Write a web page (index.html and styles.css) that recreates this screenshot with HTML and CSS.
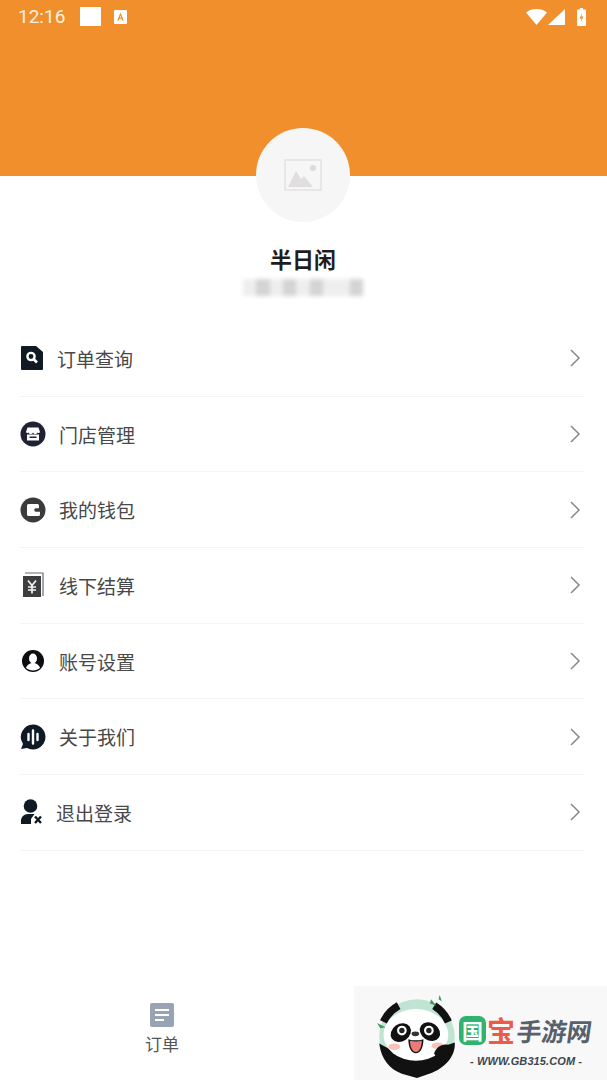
FILE: index.html
```html
<!DOCTYPE html>
<html lang="zh-CN">
<head>
    <meta charset="UTF-8">
    <meta name="viewport" content="width=device-width, initial-scale=1.0">
    <title>我的</title>
    <link rel="stylesheet" href="styles.css">
</head>

<body>
    <div class="page">
        <!-- 顶部橙色区域 -->
        <header class="top">
            <div class="status">
                <span class="time">12:16</span>
                <span class="status_square"></span>
                <svg class="status_a" width="13" height="14" viewBox="0 0 13 14"><path fill="#fff" fill-rule="evenodd" d="M1 0h11a1 1 0 0 1 1 1v12a1 1 0 0 1-1 1H1a1 1 0 0 1-1-1V1a1 1 0 0 1 1-1zm5.500 2.500L3.200 10.500h1.600l.6-1.700h2.300l.6 1.700h1.500zM5.900 7.500l.6-2 .7 2z"/></svg>
                <span class="status_right">
                    <svg width="21" height="16" viewBox="0 0 21 16"><path fill="#fff" d="M0 3.500C3 1 6.500 0 10.500 0S18 1 21 3.500L10.500 16z"/></svg>
                    <svg class="status_signal" width="17" height="16" viewBox="0 0 17 16"><path fill="#fff" d="M17 0v16H0z"/></svg>
                    <svg class="status_battery" width="9" height="18" viewBox="0 0 9 18"><path fill="#fff" fill-rule="evenodd" d="M3 0h3v1.500h2a1 1 0 0 1 1 1V17a1 1 0 0 1-1 1H1a1 1 0 0 1-1-1V2.500a1 1 0 0 1 1-1h2zM5 5L2.500 10.500h2L4 14l2.500-5.500h-2z"/></svg>
                </span>
            </div>
        </header>

        <div class="profile">
            <div class="avatar">
                <svg width="38" height="32" viewBox="0 0 38 32">
                    <path fill="none" stroke="#e4e2e2" stroke-width="1.500" d="M1 1h36v30H1z"/>
                    <circle cx="29" cy="9" r="3" fill="#dcdada"/>
                    <path fill="#e0dede" d="M4 28l8-16 5 8 3-3 9 11z"/>
                </svg>
            </div>
            <div class="name">半日闲</div>
            <div class="phone">
                <i></i><i class="dark"></i><i></i><i class="dark"></i><i></i><i class="dark"></i><i></i><i></i><i class="dark"></i>
            </div>
        </div>

        <ul class="menu">
            <li class="menu_item">
                <svg class="menu_icon" width="37" height="26" viewBox="0 0 37 26"><path fill="#0f1a24" d="M2 1h14l7 6v17a1 1 0 0 1-1 1H2a1 1 0 0 1-1-1V2a1 1 0 0 1 1-1z"/><circle cx="11" cy="11.500" r="3.600" fill="none" stroke="#fff" stroke-width="2.400"/><path stroke="#fff" stroke-width="2.600" d="M13.500 14l3.500 3.500"/></svg>
                <span>订单查询</span>
                <svg class="arrow" width="12" height="20" viewBox="0 0 12 20"><path fill="none" stroke="#888" stroke-width="1.500" d="M2 2l8 8-8 8"/></svg>
            </li>
            <li class="menu_item">
                <svg class="menu_icon" width="39" height="26" viewBox="0 0 39 26"><circle cx="13" cy="13" r="12.500" fill="#1e2233"/><path fill="#fff" d="M7.500 6.500h11l1.500 4.500a1.500 1.500 0 0 1-2.400.5 2.500 2.500 0 0 1-4.600 0 2.500 2.500 0 0 1-4.600 0A1.500 1.500 0 0 1 6 11z"/><path fill="#fff" d="M7 13.500h12v6H7z"/><path fill="#1e2233" d="M9.500 15.500h7V17h-7z"/></svg>
                <span>门店管理</span>
                <svg class="arrow" width="12" height="20" viewBox="0 0 12 20"><path fill="none" stroke="#888" stroke-width="1.500" d="M2 2l8 8-8 8"/></svg>
            </li>
            <li class="menu_item">
                <svg class="menu_icon" width="39" height="26" viewBox="0 0 39 26"><circle cx="13" cy="13" r="12.500" fill="#3b3b3d"/><path fill="#fff" d="M7 8.500A1.500 1.500 0 0 1 8.500 7h9A1.500 1.500 0 0 1 19 8.500v2.700h-3a1.800 1.800 0 0 0 0 3.600h4V17.500a1.500 1.500 0 0 1-1.500 1.500h-10A1.500 1.500 0 0 1 7 17.500z"/></svg>
                <span>我的钱包</span>
                <svg class="arrow" width="12" height="20" viewBox="0 0 12 20"><path fill="none" stroke="#888" stroke-width="1.500" d="M2 2l8 8-8 8"/></svg>
            </li>
            <li class="menu_item">
                <svg class="menu_icon" width="39" height="28" viewBox="0 0 39 28"><path fill="none" stroke="#6a6a6a" stroke-width="1.200" d="M5 2h18v23"/><path fill="#3d3e40" d="M3 5h18v21H3z"/><path fill="none" stroke="#f4f4f4" stroke-width="1.700" d="M8 9.500l4 5 4-5M12 14.500v8M8 16h8M8 19h8"/></svg>
                <span>线下结算</span>
                <svg class="arrow" width="12" height="20" viewBox="0 0 12 20"><path fill="none" stroke="#888" stroke-width="1.500" d="M2 2l8 8-8 8"/></svg>
            </li>
            <li class="menu_item">
                <svg class="menu_icon" width="39" height="26" viewBox="0 0 39 26"><circle cx="13" cy="13" r="11" fill="#0b0d10"/><ellipse cx="13" cy="10.500" rx="4" ry="5" fill="#fff"/><path fill="#fff" d="M6 20c1-3.500 4-5 7-5s6 1.500 7 5c-2 1.700-4.200 2.400-7 2.400S8 21.700 6 20z"/></svg>
                <span>账号设置</span>
                <svg class="arrow" width="12" height="20" viewBox="0 0 12 20"><path fill="none" stroke="#888" stroke-width="1.500" d="M2 2l8 8-8 8"/></svg>
            </li>
            <li class="menu_item">
                <svg class="menu_icon" width="39" height="26" viewBox="0 0 39 26"><path fill="#0f1a24" d="M13 .5a12.500 12.500 0 1 1-6 23.500l-6 1 2-5A12.500 12.500 0 0 1 13 .5z"/><path stroke="#fff" stroke-width="2.400" stroke-linecap="round" d="M8.500 10v6M13 6.500v13M17.500 10v6"/></svg>
                <span>关于我们</span>
                <svg class="arrow" width="12" height="20" viewBox="0 0 12 20"><path fill="none" stroke="#888" stroke-width="1.500" d="M2 2l8 8-8 8"/></svg>
            </li>
            <li class="menu_item">
                <svg class="menu_icon" width="36" height="26" viewBox="0 0 36 26"><circle cx="10.500" cy="7" r="6.800" fill="#0f1a24"/><path fill="#0f1a24" d="M1 25v-3c0-4 3-7 7-7h6.500L11 20v5z"/><path stroke="#0f1a24" stroke-width="2.400" d="M15 17.500l6 6.500M21 17.500L15 24"/></svg>
                <span>退出登录</span>
                <svg class="arrow" width="12" height="20" viewBox="0 0 12 20"><path fill="none" stroke="#888" stroke-width="1.500" d="M2 2l8 8-8 8"/></svg>
            </li>
        </ul>

        <nav class="tabbar">
            <div class="tab">
                <svg width="24" height="24" viewBox="0 0 24 24"><rect width="24" height="24" rx="2" fill="#98a3b3"/><path stroke="#fff" stroke-width="1.800" d="M5 7h14M5 12h14M5 17h9"/></svg>
                <span>订单</span>
            </div>
        </nav>

        <!-- 水印 -->
        <div class="mark">
            <svg class="panda" width="92" height="94" viewBox="4.670 3.800 85.200 87">
                <circle cx="63" cy="51" r="35" fill="#bfe4d2"/>
                <path fill="none" stroke="#111" stroke-width="7" d="M33 37A33 33 0 0 1 47 22M80 22A33 33 0 0 1 93 37" transform="translate(-1 0)"/>
                <path fill="#3f9a5f" d="M76 16l5 6-6-2zM84 12l2 6-3-2zM26 38l8 4-5 1z"/>
                <path fill="#111" d="M28 57l9 5 52-3 9-3c1 14-11 24-21 28l-14 5-14-4C38 81 30 72 28 57z"/>
                <ellipse cx="62" cy="49" rx="30" ry="24" fill="#fff"/>
                <ellipse cx="48" cy="47" rx="10" ry="8" fill="#111" transform="rotate(-35 48 47)"/>
                <ellipse cx="75" cy="46" rx="10" ry="8" fill="#111" transform="rotate(35 75 46)"/>
                <circle cx="49" cy="45" r="4.500" fill="#fff"/>
                <circle cx="74" cy="45" r="4.500" fill="#fff"/>
                <circle cx="49" cy="45" r="2.500" fill="#222"/>
                <circle cx="74" cy="45" r="2.500" fill="#222"/>
                <ellipse cx="61.500" cy="48" rx="3.500" ry="2.200" fill="#333"/>
                <path fill="#111" d="M55 53c4 1.500 10 1.500 14 0 0 8-3 13-7 13s-7-5-7-13z"/>
                <path fill="#ec7a78" d="M56.500 54.500c3.500 1 8 1 11 0 0 6-2.500 10.500-5.500 10.500s-5.500-4.500-5.500-10.500z"/>
                <ellipse cx="42" cy="60" rx="5.500" ry="3" fill="#f6c3ba"/>
                <ellipse cx="82" cy="59" rx="5.500" ry="3" fill="#f6c3ba"/>
                <path fill="#111" d="M79 66c1-5 7-9 12-8 4 2 4 8 1 13l-8 8z"/>
            </svg>
            <div class="mark_text">
                <div class="mark_logo">
                    <span class="mark_guo">国</span><span class="mark_bao">宝</span><span class="mark_name">手游网</span>
                </div>
                <div class="mark_url">- WWW.GB315.COM -</div>
            </div>
        </div>
    </div>
</body>
</html>
```

FILE: styles.css
```css
*{
    box-sizing: border-box;
}
html,body{
    margin: 0;
    padding: 0;
}
body{
    font-family: "Noto Sans CJK SC", "Noto Sans", sans-serif;
    background-color: #fff;
}
.page{
    position: relative;
    display: flex;
    flex-direction: column;
    width: 607px;
    height: 1080px;
    overflow: hidden;
}

/* 顶部 */
.top{
    flex-shrink: 0;
    height: 176px;
    background-color: #f18f2d;
}
.status{
    display: flex;
    align-items: center;
    height: 33px;
    padding: 0 21px 0 18px;
    color: #fdf1e3;
}
.time{
    width: 62px;
    font-family: Roboto, sans-serif;
    font-size: 19px;
}
.status_square{
    width: 21px;
    height: 19px;
    background-color: #fff;
}
.status_a{
    margin-left: 13px;
}
.status_right{
    display: flex;
    align-items: center;
    margin-left: auto;
}
.status_signal{
    margin-left: 1px;
}
.status_battery{
    margin-left: 12px;
}

/* 头像 */
.profile{
    flex-shrink: 0;
    display: flex;
    flex-direction: column;
    align-items: center;
    height: 193px;
    margin-top: -48px;
    padding-right: 1px;
}
.avatar{
    flex-shrink: 0;
    display: flex;
    align-items: center;
    justify-content: center;
    width: 94px;
    height: 94px;
    border-radius: 50%;
    background-color: #f6f6f7;
}
.name{
    margin-top: 19px;
    font-size: 22px;
    line-height: 34px;
    font-weight: 700;
    color: #1d1d1f;
}
.phone{
    display: flex;
    width: 120px;
    height: 17px;
    margin-top: 4px;
    filter: blur(2px);
}
.phone i{
    flex: 1;
    background-color: #eeeeee;
}
.phone i.dark{
    background-color: #d4d4d4;
}

/* 菜单 */
.menu{
    flex-shrink: 0;
    list-style: none;
    margin: 0;
    padding: 0 23px 0 20px;
}
.menu_item{
    display: flex;
    align-items: center;
    height: 75.7px;
    border-bottom: 1px solid #f4f4f4;
    font-size: 19px;
    color: #484848;
    padding-right: 3px;
}
.menu_icon{
    flex-shrink: 0;
}
.arrow{
    margin-left: auto;
}

/* 底部 */
.tabbar{
    display: flex;
    margin-top: auto;
    height: 90px;
}
.tab{
    display: flex;
    flex-direction: column;
    align-items: center;
    width: 324px;
    padding-top: 13px;
    font-size: 17px;
    color: #555;
}
.tab span{
    margin-top: 4px;
    line-height: 26px;
}

/* 水印 */
.mark{
    position: absolute;
    right: 0;
    bottom: 0;
    display: flex;
    width: 253px;
    height: 94px;
    background-color: #f8f8f8;
}
.panda{
    flex-shrink: 0;
    overflow: visible;
}
.mark_text{
    padding: 29px 0 0 13px;
}
.mark_logo{
    display: flex;
    align-items: center;
    height: 30px;
    font-weight: 700;
}
.mark_guo{
    display: flex;
    align-items: center;
    justify-content: center;
    width: 27px;
    height: 29px;
    border-radius: 7px;
    background-color: #2fb36e;
    color: #fff;
    font-size: 21px;
}
.mark_bao{
    margin-left: 1px;
    color: #ee5a48;
    font-size: 28px;
}
.mark_name{
    margin-left: 2px;
    color: #56616c;
    font-size: 25px;
    transform: skewX(-8deg);
}
.mark_url{
    margin: 10px 0 0 11px;
    font-family: "Liberation Sans", sans-serif;
    font-size: 11px;
    line-height: 12px;
    font-weight: 700;
    font-style: italic;
    letter-spacing: 0.1px;
    color: #3e4650;
}
```
